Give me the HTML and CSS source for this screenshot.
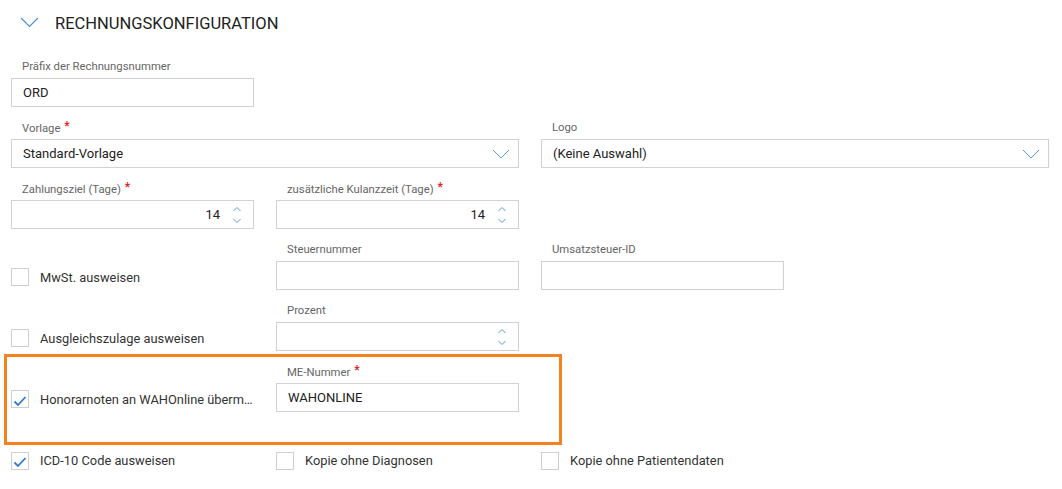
FILE: index.html
```html
<!DOCTYPE html>
<html lang="de">
<head>
<meta charset="utf-8">
<link rel="stylesheet" href="styles.css">
</head>
<body>
<div class="page">
  <div class="section-header">
    <svg class="hdr-chevron" width="19" height="11" viewBox="0 0 19 11"><path d="M1 1 L9.5 9.5 L18 1" fill="none" stroke="#4a90d9" stroke-width="1.2"/></svg>
    <span class="hdr-title">RECHNUNGSKONFIGURATION</span>
  </div>

  <div class="grid">
    <div class="field">
      <div class="label">Präfix der Rechnungsnummer</div>
      <div class="input"><span class="val">ORD</span></div>
    </div>
  </div>

  <div class="grid">
    <div class="field span2">
      <div class="label">Vorlage <span class="req">*</span></div>
      <div class="input select"><span class="val">Standard-Vorlage</span>
        <svg class="dd" width="18" height="10" viewBox="0 0 18 10"><path d="M1 1 L9 9 L17 1" fill="none" stroke="#5b9bd5" stroke-width="1"/></svg>
      </div>
    </div>
    <div class="field span2">
      <div class="label">Logo</div>
      <div class="input select"><span class="val">(Keine Auswahl)</span>
        <svg class="dd" width="18" height="10" viewBox="0 0 18 10"><path d="M1 1 L9 9 L17 1" fill="none" stroke="#5b9bd5" stroke-width="1"/></svg>
      </div>
    </div>
  </div>

  <div class="grid">
    <div class="field">
      <div class="label">Zahlungsziel (Tage) <span class="req">*</span></div>
      <div class="input number"><span class="val">14</span>
        <svg class="spin" width="10" height="18" viewBox="0 0 10 18"><path d="M1.5 5 L5 1.5 L8.5 5 M1.5 13 L5 16.5 L8.5 13" fill="none" stroke="#5b9bd5" stroke-width="1"/></svg>
      </div>
    </div>
    <div class="field">
      <div class="label">zusätzliche Kulanzzeit (Tage) <span class="req">*</span></div>
      <div class="input number"><span class="val">14</span>
        <svg class="spin" width="10" height="18" viewBox="0 0 10 18"><path d="M1.5 5 L5 1.5 L8.5 5 M1.5 13 L5 16.5 L8.5 13" fill="none" stroke="#5b9bd5" stroke-width="1"/></svg>
      </div>
    </div>
  </div>

  <div class="grid">
    <div class="check-cell">
      <span class="cb"></span><span class="cb-label">MwSt. ausweisen</span>
    </div>
    <div class="field">
      <div class="label">Steuernummer</div>
      <div class="input"></div>
    </div>
    <div class="field">
      <div class="label">Umsatzsteuer-ID</div>
      <div class="input"></div>
    </div>
  </div>

  <div class="grid">
    <div class="check-cell">
      <span class="cb"></span><span class="cb-label">Ausgleichszulage ausweisen</span>
    </div>
    <div class="field">
      <div class="label">Prozent</div>
      <div class="input number"><span class="val"></span>
        <svg class="spin" width="10" height="18" viewBox="0 0 10 18"><path d="M1.5 5 L5 1.5 L8.5 5 M1.5 13 L5 16.5 L8.5 13" fill="none" stroke="#5b9bd5" stroke-width="1"/></svg>
      </div>
    </div>
  </div>

  <div class="grid highlight">
    <div class="check-cell">
      <span class="cb checked"><svg width="14" height="12" viewBox="0 0 14 12"><path d="M1.5 6.5 L5 10 L12.5 2" fill="none" stroke="#2b7bd0" stroke-width="1.8"/></svg></span><span class="cb-label ellip">Honorarnoten an WAHOnline übermitteln</span>
    </div>
    <div class="field">
      <div class="label">ME-Nummer <span class="req">*</span></div>
      <div class="input"><span class="val">WAHONLINE</span></div>
    </div>
  </div>

  <div class="grid last">
    <div class="check-cell">
      <span class="cb checked"><svg width="14" height="12" viewBox="0 0 14 12"><path d="M1.5 6.5 L5 10 L12.5 2" fill="none" stroke="#2b7bd0" stroke-width="1.8"/></svg></span><span class="cb-label">ICD-10 Code ausweisen</span>
    </div>
    <div class="check-cell">
      <span class="cb"></span><span class="cb-label">Kopie ohne Diagnosen</span>
    </div>
    <div class="check-cell">
      <span class="cb"></span><span class="cb-label">Kopie ohne Patientendaten</span>
    </div>
  </div>
</div>
</body>
</html>
```
FILE: styles.css
```css
* { box-sizing: border-box; }
html, body { margin: 0; padding: 0; background: #fff; }
body {
  font-family: Roboto, "Liberation Sans", Arial, sans-serif;
  color: #222;
  width: 1062px;
  height: 489px;
  overflow: hidden;
}
.page {
  padding: 0 0 0 11px;
}
.section-header {
  display: flex;
  align-items: center;
  height: 46px;
  padding-left: 9px;
}
.hdr-chevron { margin-top: -2px; }
.hdr-title {
  margin-left: 16px;
  font-size: 16.5px;
  color: #222;
}
.grid {
  display: grid;
  grid-template-columns: repeat(4, 243px);
  column-gap: 22px;
  margin-top: 13px;
}
.field { display: flex; flex-direction: column; }
.span2 { grid-column: span 2; }
.label {
  height: 16px;
  line-height: 16px;
  font-size: 11.3px;
  color: #666;
  padding-left: 11px;
  margin-bottom: 3px;
  white-space: nowrap;
}
.req { color: #e0202a; font-size: 12px; font-weight: bold; position: relative; top: -2px; margin-left: 1px; }
.input {
  height: 29px;
  border: 1px solid #d2d2d2;
  background: #fff;
  display: flex;
  align-items: center;
  padding: 0 11px;
  font-size: 13px;
  color: #222;
}
.input .val { flex: 1; }
.select .dd { flex: none; margin-right: -3px; margin-top: 1px; }
.number .val { text-align: right; padding-right: 12px; }
.number .spin { flex: none; }
.check-cell {
  display: flex;
  align-items: center;
  height: 29px;
  align-self: end;
  padding-top: 3px;
}
.cb {
  width: 18px;
  height: 18px;
  border: 1px solid #cfcfcf;
  background: #fff;
  flex: none;
  display: flex;
  align-items: center;
  justify-content: center;
}
.cb.checked svg { margin-top: 3px; }
.cb-label {
  margin-left: 11px;
  font-size: 12.85px;
  color: #333;
  white-space: nowrap;
}
.cb-label.ellip {
  overflow: hidden;
  text-overflow: ellipsis;
  max-width: 214px;
}
.highlight { position: relative; }
.highlight::before {
  content: "";
  position: absolute;
  left: -7px;
  top: -10px;
  width: 552px;
  height: 85px;
  border: 3px solid #f5821f;
  pointer-events: none;
}
.last { margin-top: 34px; }
.last .check-cell { align-self: start; padding-top: 0; }
```
